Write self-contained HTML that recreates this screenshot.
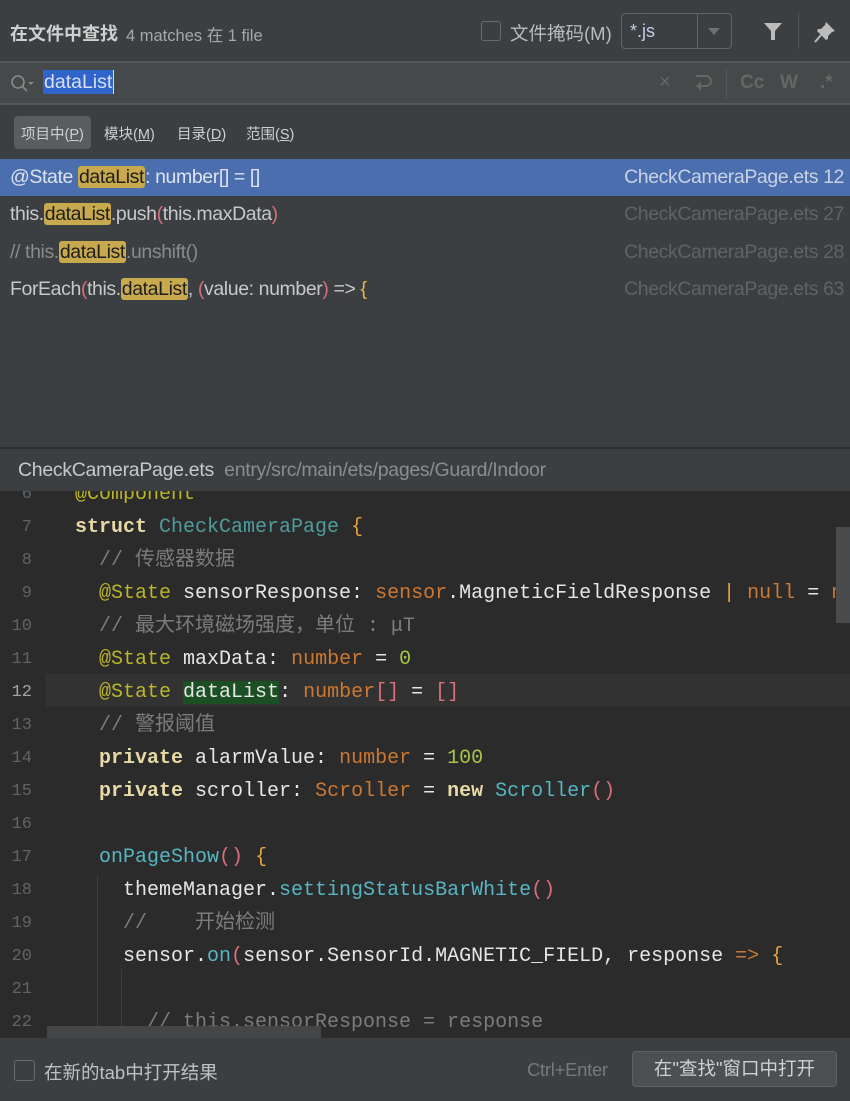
<!DOCTYPE html>
<html><head><meta charset="utf-8"><style>
*{margin:0;padding:0;box-sizing:border-box}
body{width:850px;height:1101px;background:#3c3f41;font-family:"Liberation Sans","Noto Sans CJK SC",sans-serif;color:#bbbbbb;position:relative;overflow:hidden}
.abs{position:absolute}
.hl{background:#c8a94d;color:#1e1e1e;border-radius:3px;padding:0 1px}
.row{position:absolute;left:0;width:850px;height:37px;line-height:37px;font-size:19.5px;padding-left:10px;color:#c8c8c8;letter-spacing:-0.4px}
.row .f{position:absolute;right:6px;top:0;color:#5f6366}
.p{color:#d86f7a}.y{color:#e8b94a}
#ed{position:absolute;left:0;top:491px;width:850px;height:547px;background:#2b2b2b;overflow:hidden}
.ln{position:absolute;left:0;width:46px;height:33px;line-height:33px;font-family:"Liberation Mono",monospace;font-size:17px;color:#606366;text-align:right;padding-right:14px}
.cl{position:absolute;left:75px;height:33px;line-height:33px;font-family:"Liberation Mono","Noto Sans CJK SC",monospace;font-size:20px;color:#e6e6e6;white-space:pre}
.k{color:#e6d9a6;font-weight:bold}.a{color:#bbb529}.o{color:#cc7832}.c{color:#7c7c7c}.t{color:#4f9c9c}.fn{color:#56b6c2}.n{color:#a6c44a}.pk{color:#d86f7a}.yb{color:#e8a33c}
</style></head><body>
<div class="abs" style="left:10px;top:20px;font-size:18px;font-weight:bold;color:#d0d0d0">在文件中查找</div>
<div class="abs" style="left:126px;top:22px;font-size:16.5px;color:#a8a8a8">4 matches 在 1 file</div>
<div class="abs" style="left:481px;top:21px;width:20px;height:20px;border:1px solid #6b6b6b;border-radius:3px;background:#3c3f41"></div>
<div class="abs" style="left:510px;top:20px;font-size:18.5px;color:#bbbbbb">文件掩码(M)</div>
<div class="abs" style="left:621px;top:13px;width:111px;height:36px;border:1px solid #646464;border-radius:4px"></div>
<div class="abs" style="left:697px;top:14px;width:1px;height:34px;background:#646464"></div>
<div class="abs" style="left:630px;top:21px;font-size:18px;color:#c0d0e8">*.js</div>
<div class="abs" style="left:708px;top:28px;width:0;height:0;border-left:6px solid transparent;border-right:6px solid transparent;border-top:7px solid #6e6e6e"></div>
<svg class="abs" style="left:763px;top:22px" width="20" height="20" viewBox="0 0 20 20"><path d="M1 1h18l-7 8v9h-4v-9z" fill="#bcbcbc"/></svg>
<div class="abs" style="left:798px;top:13px;width:1px;height:36px;background:#555"></div>
<svg class="abs" style="left:813px;top:20px" width="24" height="24" viewBox="0 0 24 24"><path d="M13 2l9 9-3 1-4 4 0 3-2 1-9-9 1-2 3 0 4-4z" fill="#bcbcbc"/><path d="M8 15l-6 7" stroke="#bcbcbc" stroke-width="2"/></svg>
<div class="abs" style="left:0;top:61px;width:850px;height:2px;background:#555859"></div>
<div class="abs" style="left:0;top:63px;width:850px;height:40px;background:#45494a"></div>
<svg class="abs" style="left:10px;top:73px" width="28" height="22" viewBox="0 0 28 22"><circle cx="8" cy="9" r="6" stroke="#8a8a8a" stroke-width="1.6" fill="none"/><path d="M12 13l5 5" stroke="#8a8a8a" stroke-width="1.8"/><path d="M18 9h6l-3 3z" fill="#8a8a8a"/></svg>
<div class="abs" style="left:43px;top:70px;height:24px;line-height:24px;background:#2f65ca;color:#d8e0ee;font-size:19.5px;padding:0 1px;border-right:1px solid #ddd">dataList</div>
<div class="abs" style="left:659px;top:71px;font-size:20px;color:#666">×</div>
<svg class="abs" style="left:692px;top:73px" width="22" height="20" viewBox="0 0 22 20"><path d="M4 3h10a5 5 0 0 1 0 10H8" stroke="#666" stroke-width="2" fill="none"/><path d="M9 8l-5 5 5 5z" fill="#666"/></svg>
<div class="abs" style="left:726px;top:69px;width:1px;height:30px;background:#555"></div>
<div class="abs" style="left:740px;top:72px;font-size:19px;font-weight:bold;color:#666">Cc</div>
<div class="abs" style="left:780px;top:72px;font-size:19px;font-weight:bold;color:#666">W</div>
<div class="abs" style="left:820px;top:72px;font-size:19px;font-weight:bold;color:#666">.*</div>
<div class="abs" style="left:0;top:103px;width:850px;height:2px;background:#555859"></div>
<div class="abs" style="left:14px;top:116px;width:77px;height:33px;background:#5a5d5f;border-radius:4px"></div>
<div class="abs" style="left:21px;top:123px;font-size:14.5px;color:#cfcfcf">项目中(<u>P</u>)</div>
<div class="abs" style="left:104px;top:123px;font-size:14.5px;color:#cfcfcf">模块(<u>M</u>)</div>
<div class="abs" style="left:177px;top:123px;font-size:14.5px;color:#cfcfcf">目录(<u>D</u>)</div>
<div class="abs" style="left:246px;top:123px;font-size:14.5px;color:#cfcfcf">范围(<u>S</u>)</div>
<div class="row" style="top:159px;background:#4b6eaf;color:#dde3ee">@State <span class="hl">dataList</span>: number[] = []<span class="f" style="color:#c8d2e4">CheckCameraPage.ets 12</span></div>
<div class="row" style="top:196px">this.<span class="hl">dataList</span>.push<span class="p">(</span>this.maxData<span class="p">)</span><span class="f">CheckCameraPage.ets 27</span></div>
<div class="row" style="top:234px;color:#8a8a8a">// this.<span class="hl">dataList</span>.unshift()<span class="f">CheckCameraPage.ets 28</span></div>
<div class="row" style="top:271px">ForEach<span class="p">(</span>this.<span class="hl">dataList</span>, <span class="p">(</span>value: number<span class="p">)</span> =&gt; <span class="y">{</span><span class="f">CheckCameraPage.ets 63</span></div>
<div class="abs" style="left:0;top:447px;width:850px;height:2px;background:#2e3032"></div>
<div class="abs" style="left:18px;top:459px;font-size:19.5px;letter-spacing:-0.3px;color:#c8c8c8">CheckCameraPage.ets <span style="color:#8c8c8c">&nbsp;entry/src/main/ets/pages/Guard/Indoor</span></div>
<div id="ed">
<div class="abs" style="left:46px;top:183px;width:804px;height:33px;background:#323232"></div>
<div class="abs" style="left:97px;top:384px;width:1px;height:163px;background:#3c3c3c"></div>
<div class="abs" style="left:121px;top:478px;width:1px;height:69px;background:#3c3c3c"></div>
<div class="ln" style="top:-13px">6</div><div class="cl a" style="top:-13px">@Component</div>
<div class="ln" style="top:20px">7</div><div class="cl" style="top:20px"><span class="k">struct</span> <span class="t">CheckCameraPage</span> <span class="yb">{</span></div>
<div class="ln" style="top:53px">8</div><div class="cl c" style="top:53px">  // 传感器数据</div>
<div class="ln" style="top:86px">9</div><div class="cl" style="top:86px">  <span class="a">@State</span> sensorResponse: <span class="o">sensor</span>.MagneticFieldResponse <span class="yb">|</span> <span class="o">null</span> = <span class="o">nu</span></div>
<div class="ln" style="top:119px">10</div><div class="cl c" style="top:119px">  // 最大环境磁场强度，单位 : μT</div>
<div class="ln" style="top:152px">11</div><div class="cl" style="top:152px">  <span class="a">@State</span> maxData: <span class="o">number</span> = <span class="n">0</span></div>
<div class="ln" style="top:185px;color:#a4a4a4">12</div><div class="cl" style="top:185px">  <span class="a">@State</span> <span style="background:#1d4f25">dataList</span>: <span class="o">number</span><span class="pk">[]</span> = <span class="pk">[]</span></div>
<div class="ln" style="top:218px">13</div><div class="cl c" style="top:218px">  // 警报阈值</div>
<div class="ln" style="top:251px">14</div><div class="cl" style="top:251px">  <span class="k">private</span> alarmValue: <span class="o">number</span> = <span class="n">100</span></div>
<div class="ln" style="top:284px">15</div><div class="cl" style="top:284px">  <span class="k">private</span> scroller: <span class="o">Scroller</span> = <span class="k">new</span> <span class="fn">Scroller</span><span class="pk">()</span></div>
<div class="ln" style="top:317px">16</div>
<div class="ln" style="top:350px">17</div><div class="cl" style="top:350px">  <span class="fn">onPageShow</span><span class="pk">()</span> <span class="yb">{</span></div>
<div class="ln" style="top:383px">18</div><div class="cl" style="top:383px">    themeManager.<span class="fn">settingStatusBarWhite</span><span class="pk">()</span></div>
<div class="ln" style="top:416px">19</div><div class="cl c" style="top:416px">    //    开始检测</div>
<div class="ln" style="top:449px">20</div><div class="cl" style="top:449px">    sensor.<span class="fn">on</span><span class="pk">(</span>sensor.SensorId.MAGNETIC_FIELD, response <span class="o">=&gt;</span> <span class="yb">{</span></div>
<div class="ln" style="top:482px">21</div>
<div class="ln" style="top:515px">22</div><div class="cl c" style="top:515px">      // this.sensorResponse = response</div>
<div class="abs" style="left:47px;top:535px;width:274px;height:12px;background:#48494a;opacity:.9"></div>
<div class="abs" style="left:836px;top:36px;width:14px;height:96px;background:#4a4b4c"></div>
</div>
<div class="abs" style="left:14px;top:1060px;width:21px;height:21px;border:1px solid #6b6b6b;border-radius:3px"></div>
<div class="abs" style="left:44px;top:1059px;font-size:18.5px;color:#c0c0c0">在新的tab中打开结果</div>
<div class="abs" style="left:527px;top:1059px;font-size:18.5px;letter-spacing:-0.3px;color:#787878">Ctrl+Enter</div>
<div class="abs" style="left:632px;top:1051px;width:205px;height:36px;background:#4c5052;border:1px solid #5e6264;border-radius:4px;text-align:center;line-height:34px;font-size:18.5px;color:#d0d0d0">在"查找"窗口中打开</div>
</body></html>
